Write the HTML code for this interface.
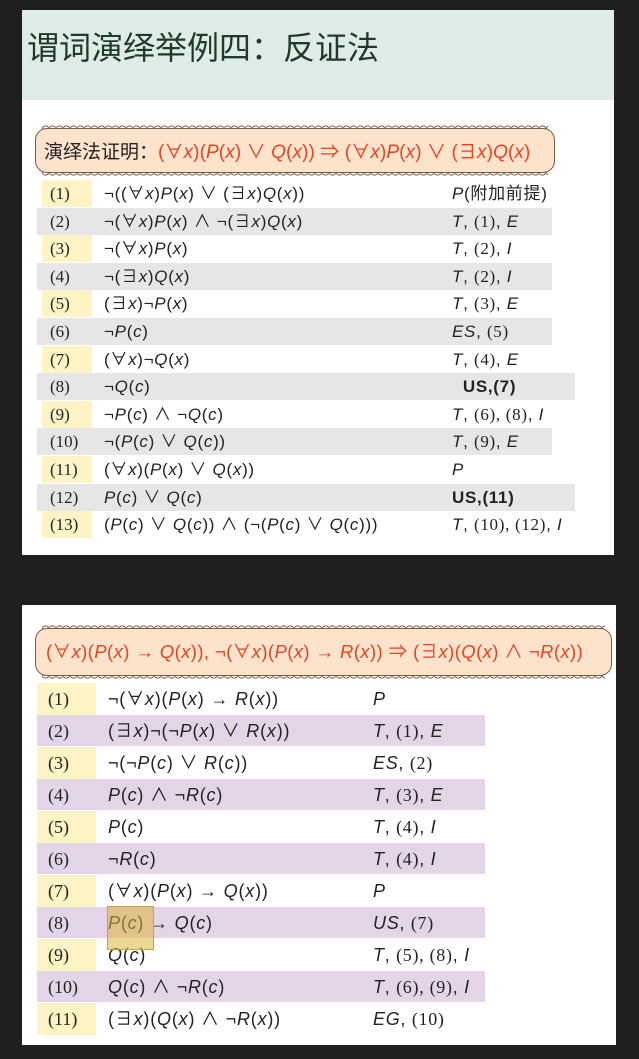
<!DOCTYPE html>
<html><head><meta charset="utf-8"><style>
body{margin:0;width:639px;height:1059px;background:#1f1f1f;position:relative;overflow:hidden;font-family:"Liberation Sans","Noto Sans CJK SC",sans-serif}
.p{position:absolute;background:#fff}
.hdr{position:absolute;left:0;top:0;width:592px;height:90px;background:#dfece6}
.ttl{position:absolute;left:5px;top:14px;font-size:32px;line-height:44px;color:#1d3a2c;font-family:"Noto Sans CJK SC",sans-serif}
.bub{position:absolute;background:#fde3cc;border:1.5px solid #7a5a44;border-radius:12px;box-sizing:border-box}
.bub:before,.bub:after{content:"";position:absolute;left:6px;right:6px;height:5px;background:radial-gradient(circle at 50% 100%,transparent 2.6px,#7a5a44 2.6px,#7a5a44 3.6px,transparent 3.6px) 0 0/7px 5px repeat-x}
.bub:before{top:-5px}
.bub:after{bottom:-5px;transform:scaleY(-1)}
.bt{position:absolute;white-space:nowrap;font-size:19px;line-height:22px;color:#e8421e;letter-spacing:.1px}
.bt *{line-height:22px}
.r{position:absolute;height:28px}
.n{position:absolute;font-family:"Liberation Serif",serif;font-size:17px;line-height:20px;color:#222}
.f{position:absolute;font-size:17px;line-height:20px;color:#222;white-space:nowrap;letter-spacing:.7px}
.f *{line-height:20px}
i{font-style:italic}
.s{font-family:"Liberation Serif",serif}
</style></head><body>

<div class="p" style="left:22px;top:10px;width:592px;height:545px">
<div class="hdr"></div>
<div class="ttl">谓词演绎举例四：反证法</div>
<div class="bub" style="left:13px;top:118px;width:520px;height:45px"></div>
<div class="bt" style="left:22px;top:130px"><span style="color:#222;font-family:'Noto Sans CJK SC',sans-serif;letter-spacing:0">演绎法证明：</span>(∀<i>x</i>)(<i>P</i>(<i>x</i>) ∨ <i>Q</i>(<i>x</i>)) ⇒ (∀<i>x</i>)<i>P</i>(<i>x</i>) ∨ (∃<i>x</i>)<i>Q</i>(<i>x</i>)</div>
</div>

<div class="p" style="left:22px;top:605px;width:594px;height:440px">
<div class="bub" style="left:13px;top:23px;width:577px;height:48px"></div>
<div class="bt" style="left:24px;top:36px;font-size:18.5px;letter-spacing:.4px">(∀<i>x</i>)(<i>P</i>(<i>x</i>) → <i>Q</i>(<i>x</i>)), ¬(∀<i>x</i>)(<i>P</i>(<i>x</i>) → <i>R</i>(<i>x</i>)) ⇒ (∃<i>x</i>)(<i>Q</i>(<i>x</i>) ∧ ¬<i>R</i>(<i>x</i>))</div>
</div>

<div id="t1"></div>
<script>
var r1=[
["(1)","¬((∀<i>x</i>)<i>P</i>(<i>x</i>) ∨ (∃<i>x</i>)<i>Q</i>(<i>x</i>))","<i>P</i>(附加前提)"],
["(2)","¬(∀<i>x</i>)<i>P</i>(<i>x</i>) ∧ ¬(∃<i>x</i>)<i>Q</i>(<i>x</i>)","<i>T</i>, <span class=s>(1)</span>, <i>E</i>"],
["(3)","¬(∀<i>x</i>)<i>P</i>(<i>x</i>)","<i>T</i>, <span class=s>(2)</span>, <i>I</i>"],
["(4)","¬(∃<i>x</i>)<i>Q</i>(<i>x</i>)","<i>T</i>, <span class=s>(2)</span>, <i>I</i>"],
["(5)","(∃<i>x</i>)¬<i>P</i>(<i>x</i>)","<i>T</i>, <span class=s>(3)</span>, <i>E</i>"],
["(6)","¬<i>P</i>(<i>c</i>)","<i>ES</i>, <span class=s>(5)</span>"],
["(7)","(∀<i>x</i>)¬<i>Q</i>(<i>x</i>)","<i>T</i>, <span class=s>(4)</span>, <i>E</i>"],
["(8)","¬<i>Q</i>(<i>c</i>)","&nbsp;&nbsp;<b>US,(7)</b>"],
["(9)","¬<i>P</i>(<i>c</i>) ∧ ¬<i>Q</i>(<i>c</i>)","<i>T</i>, <span class=s>(6), (8)</span>, <i>I</i>"],
["(10)","¬(<i>P</i>(<i>c</i>) ∨ <i>Q</i>(<i>c</i>))","<i>T</i>, <span class=s>(9)</span>, <i>E</i>"],
["(11)","(∀<i>x</i>)(<i>P</i>(<i>x</i>) ∨ <i>Q</i>(<i>x</i>))","<i>P</i>"],
["(12)","<i>P</i>(<i>c</i>) ∨ <i>Q</i>(<i>c</i>)","<b>US,(11)</b>"],
["(13)","(<i>P</i>(<i>c</i>) ∨ <i>Q</i>(<i>c</i>)) ∧ (¬(<i>P</i>(<i>c</i>) ∨ <i>Q</i>(<i>c</i>)))","<i>T</i>, <span class=s>(10), (12)</span>, <i>I</i>"]];
var r2=[
["(1)","¬(∀<i>x</i>)(<i>P</i>(<i>x</i>) → <i>R</i>(<i>x</i>))","<i>P</i>"],
["(2)","(∃<i>x</i>)¬(¬<i>P</i>(<i>x</i>) ∨ <i>R</i>(<i>x</i>))","<i>T</i>, <span class=s>(1)</span>, <i>E</i>"],
["(3)","¬(¬<i>P</i>(<i>c</i>) ∨ <i>R</i>(<i>c</i>))","<i>ES</i>, <span class=s>(2)</span>"],
["(4)","<i>P</i>(<i>c</i>) ∧ ¬<i>R</i>(<i>c</i>)","<i>T</i>, <span class=s>(3)</span>, <i>E</i>"],
["(5)","<i>P</i>(<i>c</i>)","<i>T</i>, <span class=s>(4)</span>, <i>I</i>"],
["(6)","¬<i>R</i>(<i>c</i>)","<i>T</i>, <span class=s>(4)</span>, <i>I</i>"],
["(7)","(∀<i>x</i>)(<i>P</i>(<i>x</i>) → <i>Q</i>(<i>x</i>))","<i>P</i>"],
["(8)","<i>P</i>(<i>c</i>) → <i>Q</i>(<i>c</i>)","<i>US</i>, <span class=s>(7)</span>"],
["(9)","<i>Q</i>(<i>c</i>)","<i>T</i>, <span class=s>(5), (8)</span>, <i>I</i>"],
["(10)","<i>Q</i>(<i>c</i>) ∧ ¬<i>R</i>(<i>c</i>)","<i>T</i>, <span class=s>(6), (9)</span>, <i>I</i>"],
["(11)","(∃<i>x</i>)(<i>Q</i>(<i>x</i>) ∧ ¬<i>R</i>(<i>x</i>))","<i>EG</i>, <span class=s>(10)</span>"]];
var h="";
r1.forEach(function(r,k){var t=180+k*27.6;
 if(k%2==1){var w=(k==7||k==11)?538:515;h+='<div class=r style="left:37px;top:'+t+'px;width:'+w+'px;height:27px;background:#e6e6e6"></div>';}
 else h+='<div class=r style="left:42px;top:'+t+'px;width:50px;height:27px;background:#fdf3c4"></div>';
 h+='<div class=n style="left:50px;top:'+(t+4)+'px">'+r[0]+'</div><div class=f style="left:104px;top:'+(t+4)+'px">'+r[1]+'</div><div class=f style="left:452px;top:'+(t+4)+'px">'+r[2]+'</div>';});
r2.forEach(function(r,k){var t=683+k*32;
 if(k%2==1)h+='<div class=r style="left:37px;top:'+t+'px;width:448px;height:31px;background:#e4d4e8"></div>';
 else h+='<div class=r style="left:37px;top:'+t+'px;width:59px;height:32px;background:#fdf3c4"></div>';
 h+='<div class=n style="left:48px;top:'+(t+6)+'px;font-size:18px">'+r[0]+'</div><div class=f style="left:108px;top:'+(t+6)+'px;font-size:18px;letter-spacing:.8px">'+r[1]+'</div><div class=f style="left:373px;top:'+(t+6)+'px;font-size:18px">'+r[2]+'</div>';});
h+='<div style="position:absolute;left:107px;top:906px;width:45px;height:42px;background:rgba(220,180,60,.55);border:1px solid #c9a040"></div>';
document.getElementById("t1").innerHTML=h;
</script>
</body></html>
